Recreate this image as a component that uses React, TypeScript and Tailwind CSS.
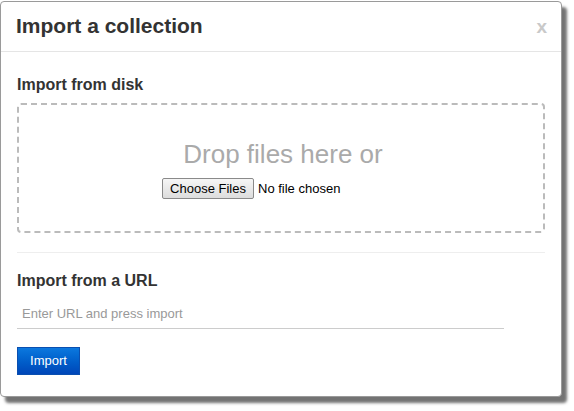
import React from "react";

export default function App() {
  return (
    <div
      className="w-[574px] h-[411px] bg-white overflow-hidden"
      style={{ fontFamily: '"Liberation Sans", Arial, sans-serif' }}
    >
      <div className="mt-[1px] w-[562px] h-[396px] bg-white border border-[#9a9a9a] rounded-[4px] shadow-[5px_6px_3px_rgba(0,0,0,0.55)] flex flex-col">
        {/* Header */}
        <div className="flex items-start justify-between pt-[12px] pb-[12px] pl-[15px] pr-[14px] border-b border-[#e5e5e5]">
          <h1 className="text-[21px] leading-[24px] font-bold text-[#333]">Import a collection</h1>
          <span className="text-[19px] leading-[24px] font-bold text-[#c9c9c9] mt-[1px]">x</span>
        </div>

        {/* Body */}
        <div className="px-[16px] pt-[23px] flex flex-col">
          <h2 className="text-[16px] leading-[20px] font-bold text-[#333]">Import from disk</h2>

          <div className="mt-[8px] h-[130px] border-2 border-dashed border-[#bbbbbb] rounded-[4px] flex flex-col items-center pt-[34px]">
            <div className="text-[26px] leading-[30px] text-[#aaaaaa] pl-[4px]">Drop files here or</div>
            <div className="mt-[9px] w-[238px] flex items-center">
              <div className="h-[21px] w-[92px] flex items-center justify-center border border-[#8a8a8a] rounded-[2px] bg-gradient-to-b from-[#f6f6f6] to-[#dddddd] text-[13px] text-black">
                Choose Files
              </div>
              <span className="ml-[4px] text-[13px] text-black">No file chosen</span>
            </div>
          </div>

          <div className="mt-[19px] h-px bg-[#eeeeee]" />

          <h2 className="mt-[18px] text-[16px] leading-[20px] font-bold text-[#333]">Import from a URL</h2>

          <div className="mt-[5px] w-[487px] h-[33px] border-b border-[#cccccc] flex items-center pl-[5px] pt-[3px]">
            <span className="text-[13px] text-[#999999]">Enter URL and press import</span>
          </div>

          <div className="mt-[18px] w-[63px] h-[28px] flex items-center justify-center border border-[#0a4fb0] bg-gradient-to-b from-[#0c78de] to-[#0046b8] text-[13px] text-white">
            Import
          </div>
        </div>
      </div>
    </div>
  );
}
